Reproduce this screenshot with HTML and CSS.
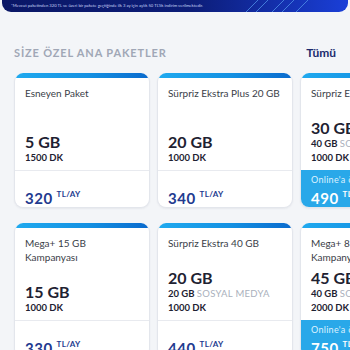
FILE: index.html
```html
<!DOCTYPE html>
<html lang="tr">
<head>
    <meta charset="UTF-8">
    <meta name="viewport" content="width=device-width, initial-scale=1.0">
    <title>Size Özel Ana Paketler</title>
    <link rel="stylesheet" href="styles.css">
</head>
<body>
    <div class="promo-banner">
        <p class="promo-note">*Mevcut paketinden 320 TL ve üzeri bir pakete geçtiğinde ilk 3 ay için aylık 50 TL'lik indirim verilmektedir.</p>
        <svg class="promo-lines" width="90" height="12" viewBox="0 0 90 12">
            <line x1="8" y1="12" x2="20" y2="0" />
            <line x1="18" y1="12" x2="30" y2="0" />
            <line x1="34" y1="12" x2="46" y2="0" />
            <line x1="44" y1="12" x2="56" y2="0" />
            <line x1="58" y1="12" x2="70" y2="0" />
        </svg>
    </div>

    <section class="packages">
        <div class="section-head">
            <h2 class="section-title">SİZE ÖZEL ANA PAKETLER</h2>
            <a class="see-all" href="#">Tümü</a>
        </div>

        <div class="card-grid">
            <!-- column 1 -->
            <div class="card">
                <div class="card-bar"></div>
                <div class="card-body">
                    <div class="card-name">Esneyen Paket</div>
                    <div class="card-specs">
                        <div class="spec-main">5 GB</div>
                        <div class="spec-line">1500 DK</div>
                    </div>
                </div>
                <div class="card-foot">
                    <span class="price">320</span><span class="price-unit">TL/AY</span>
                </div>
            </div>
            <div class="card">
                <div class="card-bar"></div>
                <div class="card-body">
                    <div class="card-name">Mega+ 15 GB Kampanyası</div>
                    <div class="card-specs">
                        <div class="spec-main">15 GB</div>
                        <div class="spec-line">1000 DK</div>
                    </div>
                </div>
                <div class="card-foot">
                    <span class="price">330</span><span class="price-unit">TL/AY</span>
                </div>
            </div>

            <!-- column 2 -->
            <div class="card">
                <div class="card-bar"></div>
                <div class="card-body">
                    <div class="card-name">Sürpriz Ekstra Plus 20 GB</div>
                    <div class="card-specs">
                        <div class="spec-main">20 GB</div>
                        <div class="spec-line">1000 DK</div>
                    </div>
                </div>
                <div class="card-foot">
                    <span class="price">340</span><span class="price-unit">TL/AY</span>
                </div>
            </div>
            <div class="card">
                <div class="card-bar"></div>
                <div class="card-body">
                    <div class="card-name">Sürpriz Ekstra 40 GB</div>
                    <div class="card-specs">
                        <div class="spec-main">20 GB</div>
                        <div class="spec-line">20 GB <span class="spec-muted">SOSYAL MEDYA</span></div>
                        <div class="spec-line">1000 DK</div>
                    </div>
                </div>
                <div class="card-foot">
                    <span class="price">440</span><span class="price-unit">TL/AY</span>
                </div>
            </div>

            <!-- column 3 -->
            <div class="card">
                <div class="card-bar"></div>
                <div class="card-body">
                    <div class="card-name">Sürpriz Ekstra 30 GB</div>
                    <div class="card-specs">
                        <div class="spec-main">30 GB</div>
                        <div class="spec-line">40 GB <span class="spec-muted">SOSYAL MEDYA</span></div>
                        <div class="spec-line">1000 DK</div>
                    </div>
                </div>
                <div class="card-foot online">
                    <div class="online-label">Online'a özel</div>
                    <span class="price">490</span><span class="price-unit">TL/AY</span>
                </div>
            </div>
            <div class="card">
                <div class="card-bar"></div>
                <div class="card-body">
                    <div class="card-name">Mega+ 85 GB Kampanyası</div>
                    <div class="card-specs">
                        <div class="spec-main">45 GB</div>
                        <div class="spec-line">40 GB <span class="spec-muted">SOSYAL MEDYA</span></div>
                        <div class="spec-line">2000 DK</div>
                    </div>
                </div>
                <div class="card-foot online">
                    <div class="online-label">Online'a özel</div>
                    <span class="price">750</span><span class="price-unit">TL/AY</span>
                </div>
            </div>
        </div>
    </section>
</body>
</html>
```

FILE: styles.css
```css
body {
    margin: 0;
    background: #f3f5f8;
    font-family: 'Lato', 'Noto Sans', sans-serif;
    color: #2b2f3a;
    overflow: hidden;
}

.promo-banner {
    position: relative;
    height: 12px;
    margin: 0 2px;
    border-radius: 0 0 9px 9px;
    background: linear-gradient(90deg, #0a1766 0%, #0c1d78 55%, #1a3fd8 100%);
    overflow: hidden;
}

.promo-note {
    margin: 0;
    padding: 3px 0 0 9px;
    font-size: 4.2px;
    line-height: 5px;
    color: #c9d3f5;
    white-space: nowrap;
}

.promo-lines {
    position: absolute;
    left: 236px;
    top: 0;
}

.promo-lines line {
    stroke: #4f8fe8;
    stroke-width: 0.8;
}

.packages {
    padding: 0 0 0 14px;
}

.section-head {
    display: flex;
    justify-content: space-between;
    align-items: center;
    padding: 31px 14px 0 0;
    height: 18px;
}

.section-title {
    margin: 0;
    font-size: 11px;
    font-weight: 700;
    letter-spacing: 0.85px;
    color: #a0a7b6;
}

.see-all {
    font-size: 12px;
    font-weight: 700;
    color: #1b2a6e;
    text-decoration: none;
}

.card-grid {
    display: grid;
    grid-template-rows: 135px 135px;
    grid-auto-flow: column;
    grid-auto-columns: 136px;
    column-gap: 7px;
    row-gap: 15px;
    margin-top: 12px;
}

.card {
    display: flex;
    flex-direction: column;
    background: #fff;
    border: 1px solid #e3e6ec;
    border-top: 0;
    border-radius: 9px;
    overflow: hidden;
    box-shadow: 0 1px 2px rgba(30, 40, 70, 0.06);
}

.card-bar {
    height: 5px;
    flex: none;
    background: linear-gradient(90deg, #20aaef 0%, #1390e2 55%, #0a6acd 100%);
}

.card-body {
    flex: 1;
    display: flex;
    flex-direction: column;
    padding: 8px 10px 5px;
}

.card-name {
    min-height: 28px;
    font-size: 10px;
    line-height: 14px;
    color: #3a3e48;
}

.card-specs {
    margin-top: auto;
}

.spec-main {
    font-size: 16px;
    line-height: 19px;
    font-weight: 700;
    color: #1e2232;
}

.spec-line {
    font-size: 9.5px;
    line-height: 14px;
    font-weight: 700;
    color: #1e2232;
}

.spec-muted {
    font-weight: 400;
    color: #a9b0bc;
    letter-spacing: 0.3px;
}

.card-foot {
    flex: none;
    height: 37px;
    box-sizing: border-box;
    padding: 13px 10px 0;
    border-top: 1px solid #e8eaef;
    line-height: 20px;
    color: #223a8f;
}

.price {
    font-size: 15px;
    font-weight: 700;
    letter-spacing: 0.5px;
}

.price-unit {
    margin-left: 4px;
    font-size: 8px;
    font-weight: 700;
    vertical-align: 7px;
    letter-spacing: 0.3px;
}

.card-foot.online {
    padding-top: 3px;
    border-top: 0;
    background: #29a8e9;
    color: #fff;
    line-height: 16px;
}

.online-label {
    font-size: 9px;
    line-height: 13px;
    color: #dff2ff;
    letter-spacing: 0.3px;
}
```
